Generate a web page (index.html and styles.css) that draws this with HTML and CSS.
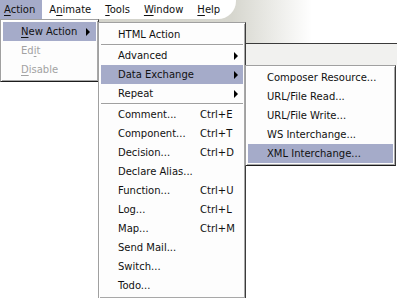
FILE: index.html
```html
<!DOCTYPE html>
<html>
	<head>
		<link rel="stylesheet" href="styles.css">
	</head>
	<body>
		<div class="toolbar">
			<div class="menubar">
				<span class="title active"><u>A</u>ction</span>
				<span class="title">A<u>n</u>imate</span>
				<span class="title"><u>T</u>ools</span>
				<span class="title"><u>W</u>indow</span>
				<span class="title"><u>H</u>elp</span>
			</div>
		</div>
		<div class="tabstrip"></div>

		<div class="popup popup-action">
			<div class="item active"><span class="label"><u>N</u>ew Action</span><span class="arrow"></span></div>
			<div class="item disabled"><span class="label">Ed<u>i</u>t</span></div>
			<div class="item disabled"><span class="label"><u>D</u>isable</span></div>
		</div>

		<div class="popup popup-new">
			<div class="item"><span class="label">HTML Action</span></div>
			<div class="sep"></div>
			<div class="item"><span class="label">Advanced</span><span class="arrow"></span></div>
			<div class="item active"><span class="label">Data Exchange</span><span class="arrow"></span></div>
			<div class="item"><span class="label">Repeat</span><span class="arrow"></span></div>
			<div class="sep"></div>
			<div class="item"><span class="label">Comment...</span><span class="key">Ctrl+E</span></div>
			<div class="item"><span class="label">Component...</span><span class="key">Ctrl+T</span></div>
			<div class="item"><span class="label">Decision...</span><span class="key">Ctrl+D</span></div>
			<div class="item"><span class="label">Declare Alias...</span></div>
			<div class="item"><span class="label">Function...</span><span class="key">Ctrl+U</span></div>
			<div class="item"><span class="label">Log...</span><span class="key">Ctrl+L</span></div>
			<div class="item"><span class="label">Map...</span><span class="key">Ctrl+M</span></div>
			<div class="item"><span class="label">Send Mail...</span></div>
			<div class="item"><span class="label">Switch...</span></div>
			<div class="item"><span class="label">Todo...</span></div>
		</div>

		<div class="popup popup-exchange">
			<div class="item"><span class="label">Composer Resource...</span></div>
			<div class="item"><span class="label">URL/File Read...</span></div>
			<div class="item"><span class="label">URL/File Write...</span></div>
			<div class="item"><span class="label">WS Interchange...</span></div>
			<div class="item active"><span class="label">XML Interchange...</span></div>
		</div>
	</body>
</html>
```

FILE: styles.css
```css
body {
	margin: 0;
	background: #fff;
	font-family: "DejaVu Sans", Verdana, sans-serif;
	font-size: 10px;
	color: #111;
	width: 397px;
	height: 298px;
	overflow: hidden;
	position: relative;
}
u {
	text-decoration: underline;
	text-underline-offset: 2px;
}
.toolbar {
	height: 43px;
	border-bottom: 1px solid #3a3a3a;
	background: linear-gradient(to right, #d2d2ca 0, #d6d6ce 232px, #fff 312px);
}
.menubar {
	width: 236px;
	height: 19px;
	background: #fff;
	border-bottom-right-radius: 18px;
	display: flex;
	align-items: center;
}
.title {
	line-height: 19px;
	padding: 0 7px;
}
.title:first-child {
	padding-left: 4px;
	padding-right: 7px;
}
.title.active {
	background: #a5abc9;
}
.tabstrip {
	height: 21px;
	background: #f1f1ef;
}
.popup {
	position: absolute;
	box-sizing: border-box;
	background: #fdfdfd;
	border: 1px solid #a0a0a0;
	border-right-color: #3c3c3c;
	border-bottom-color: #1c1c1c;
	box-shadow: inset 1px 1px 0 #fff, inset -1px -1px 0 #a8a8a8;
	padding: 2px;
}
.popup-action {
	left: 0;
	top: 19px;
	width: 99px;
	height: 63px;
}
.popup-new {
	left: 98px;
	top: 22px;
	width: 148px;
	height: 277px;
}
.popup-exchange {
	left: 245px;
	top: 65px;
	width: 151px;
	height: 101px;
}
.item {
	height: 19px;
	display: flex;
	align-items: center;
	padding-left: 17px;
	padding-right: 5px;
	white-space: nowrap;
}
.popup-action .item {
	padding-left: 18px;
	padding-right: 6px;
}
.popup-exchange .item {
	padding-left: 19px;
}
.item.active {
	background: #a5abc9;
}
.item.disabled {
	color: #a2a2a2;
}
.label {
	flex: 1;
}
.popup-new .label {
	flex: 0 0 82px;
}
.key {
	flex: 1;
}
.arrow {
	width: 0;
	height: 0;
	border-left: 4px solid #000;
	border-top: 4px solid transparent;
	border-bottom: 4px solid transparent;
	margin-left: auto;
}
.sep {
	height: 0;
	border-top: 1px solid #a0a0a0;
	border-bottom: 1px solid #fff;
}
```
